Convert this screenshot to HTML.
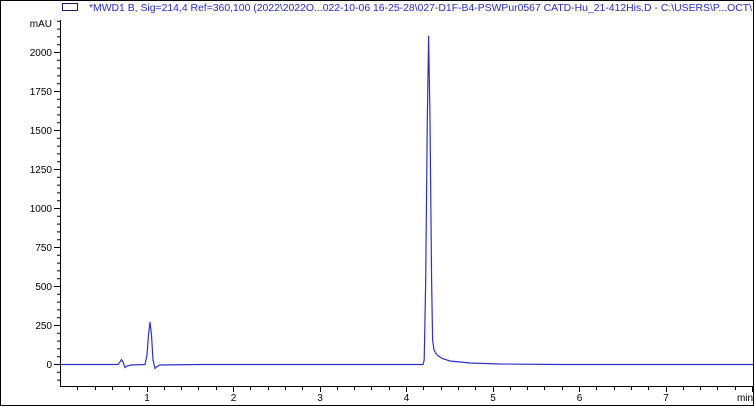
<!DOCTYPE html>
<html><head><style>
html,body{margin:0;padding:0;background:#fff;width:754px;height:406px;overflow:hidden}
svg{display:block}
text{font-family:"Liberation Sans",Arial,sans-serif;font-size:10px}
</style></head><body>
<svg width="754" height="406" viewBox="0 0 754 406">
<rect x="0.5" y="0.5" width="753" height="405" fill="#fff" stroke="#000"/>
<rect x="62.5" y="3.5" width="15" height="7" fill="none" stroke="#1a1a6e"/>
<text x="89" y="11" fill="#2a2ac8" font-size="10" textLength="663" lengthAdjust="spacingAndGlyphs">*MWD1 B, Sig=214,4 Ref=360,100 (2022\2022O...022-10-06 16-25-28\027-D1F-B4-PSWPur0567 CATD-Hu_21-412His.D - C:\USERS\P...OCT\</text>
<g stroke="#000" stroke-width="1" fill="none">
<path d="M60.5 20 V386.5 H754"/>
<path d="M57 380.1h3.5M57 372.3h3.5M54 364.5h6.5M57 356.7h3.5M57 348.9h3.5M57 341.1h3.5M57 333.3h3.5M54 325.5h6.5M57 317.7h3.5M57 309.9h3.5M57 302.1h3.5M57 294.3h3.5M54 286.5h6.5M57 278.7h3.5M57 270.9h3.5M57 263.1h3.5M57 255.3h3.5M54 247.5h6.5M57 239.7h3.5M57 231.9h3.5M57 224.1h3.5M57 216.3h3.5M54 208.5h6.5M57 200.7h3.5M57 192.9h3.5M57 185.1h3.5M57 177.3h3.5M54 169.5h6.5M57 161.7h3.5M57 153.9h3.5M57 146.1h3.5M57 138.3h3.5M54 130.5h6.5M57 122.7h3.5M57 114.9h3.5M57 107.1h3.5M57 99.3h3.5M54 91.5h6.5M57 83.7h3.5M57 75.9h3.5M57 68.1h3.5M57 60.3h3.5M54 52.5h6.5M57 44.7h3.5M57 36.9h3.5M57 29.1h3.5M57 21.3h3.5"/>
<path d="M77.5 386.5v3.5M95.5 386.5v3.5M112.5 386.5v3.5M129.5 386.5v3.5M147.5 386.5v5.5M164.5 386.5v3.5M181.5 386.5v3.5M198.5 386.5v3.5M216.5 386.5v3.5M233.5 386.5v5.5M250.5 386.5v3.5M268.5 386.5v3.5M285.5 386.5v3.5M302.5 386.5v3.5M320.5 386.5v5.5M337.5 386.5v3.5M354.5 386.5v3.5M371.5 386.5v3.5M389.5 386.5v3.5M406.5 386.5v5.5M423.5 386.5v3.5M441.5 386.5v3.5M458.5 386.5v3.5M475.5 386.5v3.5M493.5 386.5v5.5M510.5 386.5v3.5M527.5 386.5v3.5M544.5 386.5v3.5M562.5 386.5v3.5M579.5 386.5v5.5M596.5 386.5v3.5M614.5 386.5v3.5M631.5 386.5v3.5M648.5 386.5v3.5M666.5 386.5v5.5M683.5 386.5v3.5M700.5 386.5v3.5M717.5 386.5v3.5M735.5 386.5v3.5M752.5 386.5v5.5"/>
</g>
<g fill="#000" text-anchor="end">
<text x="52" y="27">mAU</text>
<text x="52" y="56">2000</text>
<text x="52" y="95">1750</text>
<text x="52" y="134">1500</text>
<text x="52" y="173">1250</text>
<text x="52" y="212">1000</text>
<text x="52" y="251">750</text>
<text x="52" y="290">500</text>
<text x="52" y="329">250</text>
<text x="52" y="368">0</text>
</g>
<g fill="#000" text-anchor="middle">
<text x="147" y="401">1</text>
<text x="233.5" y="401">2</text>
<text x="320" y="401">3</text>
<text x="406.5" y="401">4</text>
<text x="493" y="401">5</text>
<text x="579.5" y="401">6</text>
<text x="666" y="401">7</text>
<text x="745" y="401">min</text>
</g>
<path fill="none" stroke="#3030d0" stroke-width="1.2" d="M61 364.5 L118 364.5 L120 362 L121.5 359.5 L123 362 L125 367.5 L127 366 L131 365 L145 364.5 L147 355 L148.5 335 L150 322 L151.5 335 L153 360 L155 368.5 L157 366.5 L160 365 L200 364.5 L423 364.5 L424.2 360 L425.7 280 L427.3 120 L428.6 36 L430 120 L431.6 280 L432.6 340 L434 350 L437 355 L442 358.5 L450 361 L470 363 L500 364 L560 364.5 L753 364.5"/>
</svg>
</body></html>
